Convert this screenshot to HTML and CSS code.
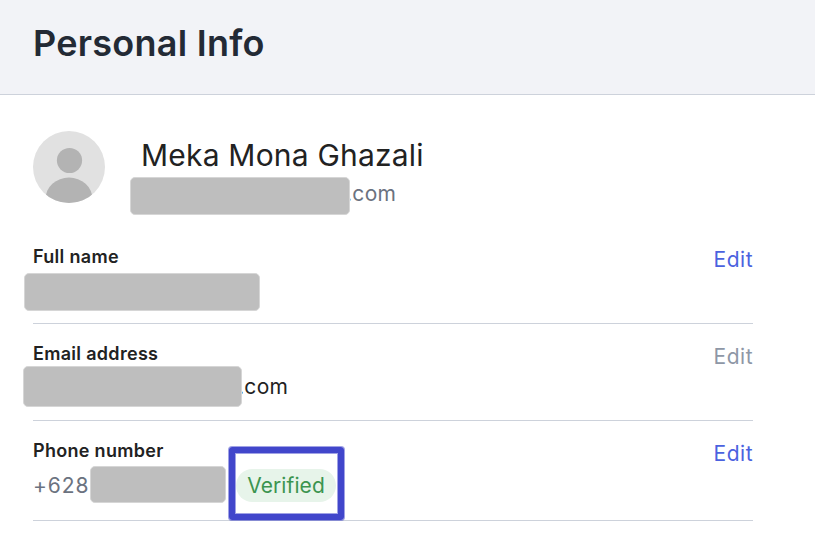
FILE: index.html
```html
<!DOCTYPE html>
<html lang="en">
<head>
    <meta charset="UTF-8">
    <meta name="viewport" content="width=device-width, initial-scale=1.0">
    <title>Personal Info</title>
    <link rel="stylesheet" href="styles.css">
</head>
<body>
    <header class="page-header">
        <h1>Personal Info</h1>
    </header>
    <main class="content">
        <section class="profile">
            <svg class="avatar" width="72" height="72" viewBox="0 0 72 72">
                <defs>
                    <clipPath id="round"><circle cx="36" cy="36" r="36"/></clipPath>
                </defs>
                <g clip-path="url(#round)">
                    <rect width="72" height="72" fill="#e1e1e1"/>
                    <circle cx="36.5" cy="29.5" r="12.6" fill="#b3b3b3"/>
                    <ellipse cx="36" cy="68" rx="23.5" ry="21.5" fill="#b3b3b3"/>
                </g>
            </svg>
            <div class="profile-text">
                <h2 class="name">Meka Mona Ghazali</h2>
                <div class="profile-email"><span class="hidden-text"></span><span class="domain">.com</span></div>
            </div>
        </section>
        <section class="row">
            <div class="field">
                <h3 class="label">Full name</h3>
                <div class="value full-name"><span class="hidden-text"></span></div>
            </div>
            <a class="edit">Edit</a>
        </section>
        <section class="row">
            <div class="field">
                <h3 class="label">Email address</h3>
                <div class="value email"><span class="hidden-text"></span><span class="domain">.com</span></div>
            </div>
            <a class="edit disabled">Edit</a>
        </section>
        <section class="row phone-row">
            <div class="field">
                <h3 class="label">Phone number</h3>
                <div class="value phone">
                    <span class="prefix">+628</span>
                    <span class="hidden-text"></span>
                    <span class="badge">Verified<span class="highlight"></span></span>
                </div>
            </div>
            <a class="edit">Edit</a>
        </section>
    </main>
</body>
</html>
```
FILE: styles.css
```css
* {
    box-sizing: border-box;
}
body {
    margin: 0;
    background: #fff;
    color: #222;
    font-family: Inter, "Liberation Sans", sans-serif;
    font-size: 21px;
    letter-spacing: 0.3px;
}
h1, h2, h3 {
    margin: 0;
}
.page-header {
    height: 95px;
    padding: 21px 33px;
    background: #f2f3f7;
    border-bottom: 1px solid #cdd2db;
}
.page-header h1 {
    font-size: 36px;
    line-height: 44px;
    font-weight: 600;
    letter-spacing: 0.25px;
    color: #232a35;
}
.content {
    width: 720px;
    margin-left: 33px;
}
.profile {
    display: flex;
    height: 132px;
    padding-top: 36px;
}
.profile-text {
    margin-left: 25px;
    padding-top: 6px;
}
.name {
    margin-left: 11px;
    font-size: 30px;
    line-height: 37px;
    font-weight: 400;
    letter-spacing: 0.2px;
}
.profile-email {
    display: flex;
    margin-top: 3px;
    color: #6b7280;
}
.hidden-text {
    flex: none;
    height: 38px;
    background: #bebebe;
    border: 1px solid #d6d6d6;
    border-radius: 5px;
}
.profile-email .hidden-text {
    width: 220px;
}
.domain {
    margin-left: -4px;
    line-height: 34px;
}
/* keep the masked part above the start of the domain */
.profile-email .hidden-text,
.email .hidden-text {
    position: relative;
    z-index: 1;
}
.row {
    display: flex;
    justify-content: space-between;
    height: 97px;
    padding-top: 17px;
    border-bottom: 1px solid #cdd2db;
}
.phone-row {
    height: 100px;
}
.label {
    padding-top: 1px;
    font-size: 18px;
    line-height: 24px;
    font-weight: 600;
    letter-spacing: 0.3px;
}
.value {
    display: flex;
}
.full-name {
    margin: 4px 0 0 -9px;
}
.full-name .hidden-text {
    width: 236px;
}
.email {
    margin: 0 0 0 -10px;
}
.email .hidden-text {
    width: 219px;
    height: 41px;
}
.email .domain {
    line-height: 41px;
}
.phone {
    margin-top: 3px;
}
.prefix {
    width: 57px;
    line-height: 40px;
    letter-spacing: 0.9px;
    color: #6b7280;
}
.phone .hidden-text {
    width: 136px;
    height: 37px;
}
.badge {
    position: relative;
    width: 100px;
    height: 33px;
    margin: 3px 0 0 10px;
    border-radius: 17px;
    background: #e7f4ea;
    color: #3c9450;
    line-height: 33px;
    letter-spacing: 0.1px;
    text-align: center;
}
.highlight {
    position: absolute;
    top: -22px;
    left: -7px;
    width: 115px;
    height: 73px;
    border: 6px solid #4146cb;
    border-radius: 3px;
    box-shadow: 0 0 0 1px rgba(65, 70, 203, 0.5), inset 0 0 0 1px rgba(65, 70, 203, 0.5);
}
.edit {
    padding-top: 2px;
    line-height: 28px;
    letter-spacing: 0.5px;
    color: #4b62df;
}
.disabled {
    color: #8e97a6;
}
```
